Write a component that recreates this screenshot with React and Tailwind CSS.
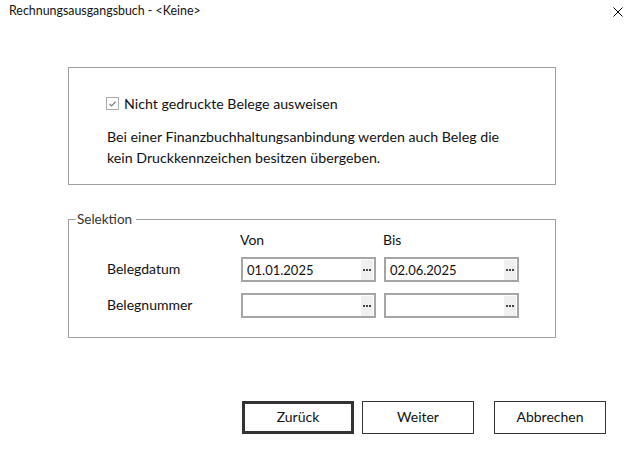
import React from "react";

function Ellipsis() {
  return (
    <div className="w-[12px] mt-[1px] mr-[1px] bg-[#f0f0f0] flex items-center justify-center gap-[1px]">
      <span className="w-[2px] h-[2px] bg-[#444]" />
      <span className="w-[2px] h-[2px] bg-[#444]" />
      <span className="w-[2px] h-[2px] bg-[#444]" />
    </div>
  );
}

function Field({ value }) {
  return (
    <div className="h-[25px] w-[135px] border-2 border-[#a5a5a5] bg-white flex items-stretch">
      <div className="flex-1 pl-[4px] flex items-center text-[13px] leading-[20px]">{value}</div>
      <Ellipsis />
    </div>
  );
}

export default function App() {
  return (
    <div className="w-[628px] h-[457px] bg-white overflow-hidden text-[#111] flex flex-col [font-family:Lato,'Noto_Sans',sans-serif]">
      <div className="h-[30px] flex justify-between items-start pl-[9px] pr-[5px] pt-[3px]">
        <span className="text-[12.4px] leading-[16px]">Rechnungsausgangsbuch - &lt;Keine&gt;</span>
        <svg width="10" height="10" viewBox="0 0 10 10" className="mt-[4px]">
          <path d="M0.5 0.5 L9.5 9.5 M9.5 0.5 L0.5 9.5" stroke="#000" strokeWidth="1" />
        </svg>
      </div>

      <div className="ml-[68px] mt-[37px] w-[488px] h-[118px] border border-[#a0a0a0] pl-[37px] pt-[25px]">
        <div className="flex items-center gap-[5px] text-[14.2px] leading-[21px]">
          <div className="w-[13px] h-[13px] border border-[#adadad] bg-white flex items-center justify-center">
            <svg width="11" height="11" viewBox="0 0 11 11">
              <path d="M2.5 5.8 L4.6 7.9 L8.6 3.6" fill="none" stroke="#707070" strokeWidth="1.1" />
            </svg>
          </div>
          <span>Nicht gedruckte Belege ausweisen</span>
        </div>
        <p className="mt-[12px] ml-px text-[14.2px] leading-[21px]">
          Bei einer Finanzbuchhaltungsanbindung werden auch Beleg die
          <br />
          kein Druckkennzeichen besitzen übergeben.
        </p>
      </div>

      <fieldset className="ml-[68px] mt-[25px] w-[488px] h-[128px] border border-[#a0a0a0] pl-[38px]">
        <legend className="-ml-[31px] pl-[1px] pr-[4px] text-[13.5px] leading-[18px] text-[#333]">Selektion</legend>
        <div className="grid grid-cols-[126px_135px_135px] gap-x-2 mt-[2px] text-[14px] leading-[20px]">
          <span />
          <span className="-ml-px">Von</span>
          <span className="-ml-px">Bis</span>
        </div>
        <div className="grid grid-cols-[126px_135px_135px] gap-x-2 mt-[7px] items-center text-[14px] leading-[20px]">
          <span className="-mt-[2px]">Belegdatum</span>
          <Field value="01.01.2025" />
          <Field value="02.06.2025" />
        </div>
        <div className="grid grid-cols-[126px_135px_135px] gap-x-2 mt-[11px] items-center text-[14px] leading-[20px]">
          <span className="-mt-[2px]">Belegnummer</span>
          <Field value="" />
          <Field value="" />
        </div>
      </fieldset>

      <div className="flex ml-[242px] mt-[63px] text-[14px] leading-[20px]">
        <button className="w-[112px] h-[33px] border-[3px] border-[#333] bg-white pb-[2px]">Zurück</button>
        <button className="ml-[8px] w-[112px] h-[33px] border border-[#333] bg-white pb-[2px]">Weiter</button>
        <button className="ml-[20px] w-[112px] h-[33px] border border-[#333] bg-white pb-[2px]">Abbrechen</button>
      </div>
    </div>
  );
}
